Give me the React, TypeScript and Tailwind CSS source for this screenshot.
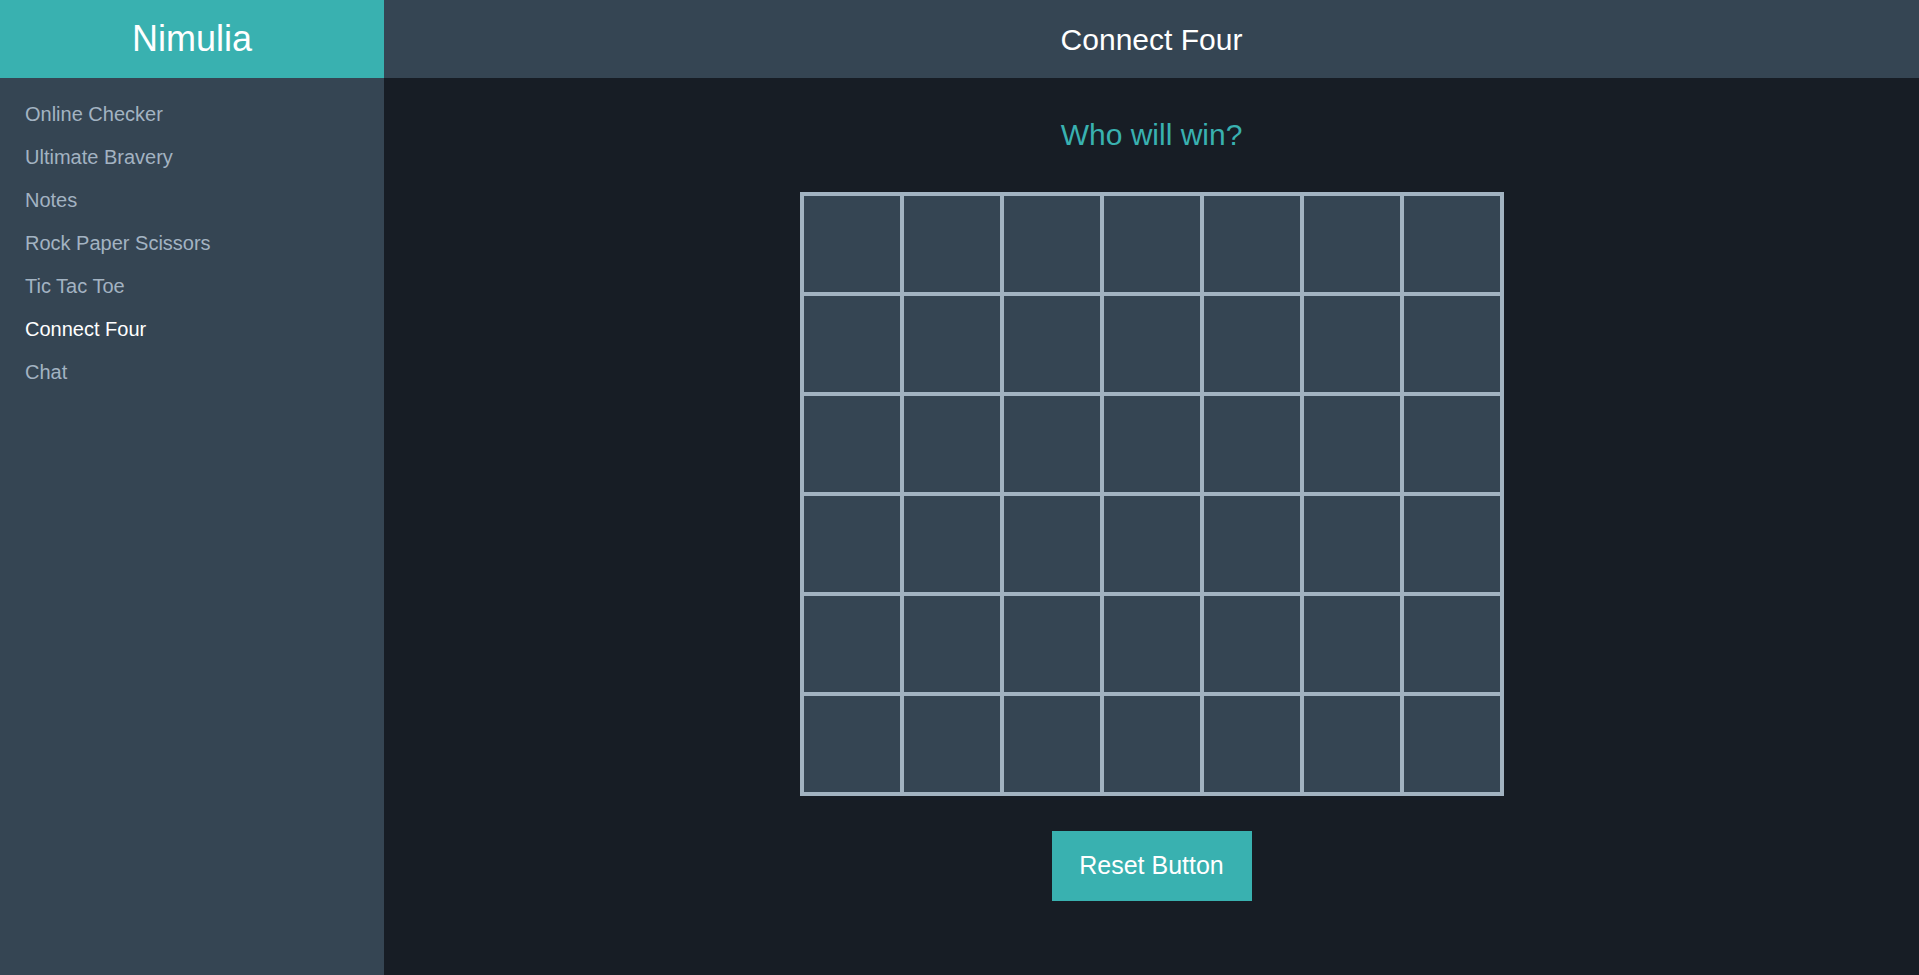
const links = [
  "Online Checker",
  "Ultimate Bravery",
  "Notes",
  "Rock Paper Scissors",
  "Tic Tac Toe",
  "Connect Four",
  "Chat",
];

const ROWS = 6;
const COLS = 7;

export default function App() {
  const board = Array.from({ length: ROWS }, () => Array.from({ length: COLS }, () => 0));

  return (
    <div className="flex h-screen w-full font-['Liberation_Sans',Arial,sans-serif]">
      {/* sidebar */}
      <aside className="flex w-[384px] shrink-0 flex-col bg-[#354553]">
        <div className="flex h-[78px] items-center justify-center bg-[#39b1b0] text-[36px] text-white">
          Nimulia
        </div>
        <nav className="flex flex-col pt-[14px]">
          {links.map((l) => (
            <a
              key={l}
              href="#"
              className={[
                "flex h-[43px] items-center px-[25px] text-[20px]",
                l === "Connect Four" ? "text-white" : "text-[#a3b3c2]",
              ].join(" ")}
            >
              {l}
            </a>
          ))}
        </nav>
      </aside>

      {/* main */}
      <div className="flex flex-1 flex-col bg-[#171d25]">
        <header className="flex h-[78px] shrink-0 items-center justify-center bg-[#354553] text-[30px] text-white">
          Connect Four
        </header>

        <main className="flex flex-col items-center pt-[40px]">
          <h2 className="text-[30px] leading-[34px] text-[#39b1b0]">Who will win?</h2>

          <div className="mt-[40px] grid grid-cols-7 border-2 border-[#a2b3c1]">
            {board.map((row, r) =>
              row.map((_, c) => (
                <div
                  key={`${r}-${c}`}
                  className="h-[100px] w-[100px] border-2 border-[#a2b3c1] bg-[#354553]"
                />
              ))
            )}
          </div>

          <button
            type="button"
            className="mt-[35px] h-[70px] w-[200px] bg-[#39b1b0] text-[25px] text-white"
          >
            Reset Button
          </button>
        </main>
      </div>
    </div>
  );
}
